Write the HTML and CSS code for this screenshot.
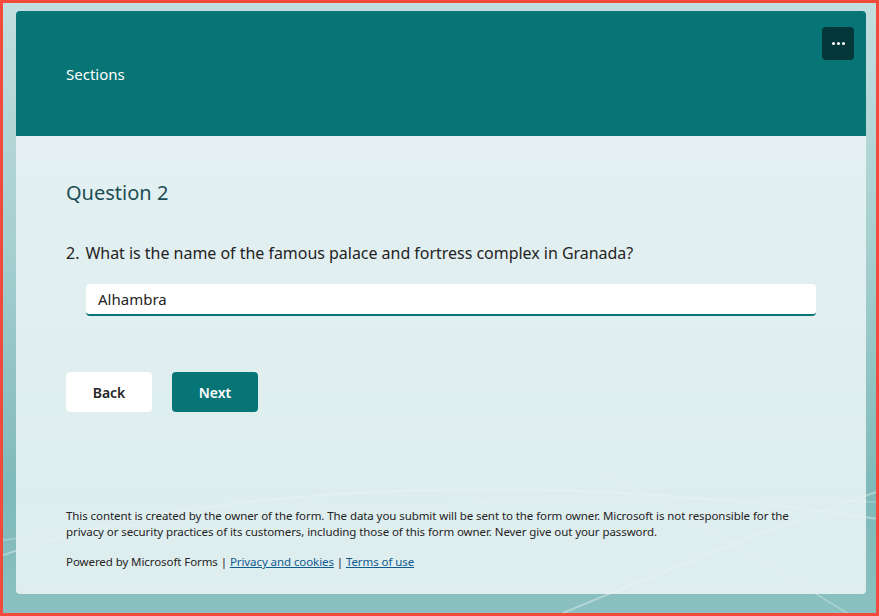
FILE: index.html
```html
<!DOCTYPE html>
<html lang="en">
<head>
<meta charset="utf-8">
<title>Sections</title>
<link rel="stylesheet" href="styles.css">
</head>
<body>
<div class="frame">
  <svg class="swoosh" width="873" height="610" viewBox="0 0 873 610" aria-hidden="true">
    <path d="M-20 560 C 200 470, 600 470, 900 520" fill="none" stroke="#ffffff" stroke-opacity="0.35" stroke-width="2"/>
    <path d="M-20 540 C 250 500, 650 490, 900 500" fill="none" stroke="#ffffff" stroke-opacity="0.25" stroke-width="1.5"/>
    <path d="M560 610 C 680 560, 780 520, 900 480" fill="none" stroke="#ffffff" stroke-opacity="0.35" stroke-width="2"/>
    <path d="M600 470 C 700 520, 780 570, 860 620" fill="none" stroke="#ffffff" stroke-opacity="0.3" stroke-width="1.5"/>
  </svg>
  <main class="card">
    <header class="card-head">
      <h1 class="title">Sections</h1>
      <button class="more" aria-label="More options">
        <span class="dot"></span><span class="dot"></span><span class="dot"></span>
      </button>
    </header>
    <section class="card-body">
      <h2 class="section-title">Question 2</h2>
      <div class="question">
        <span class="qnum">2.</span>
        <span class="qtext">What is the name of the famous palace and fortress complex in Granada?</span>
      </div>
      <div class="answer">Alhambra</div>
      <div class="buttons">
        <button class="btn btn-back">Back</button>
        <button class="btn btn-next">Next</button>
      </div>
      <footer class="footer">
        <p class="disclaimer">This content is created by the owner of the form. The data you submit will be sent to the form owner. Microsoft is not responsible for the privacy or security practices of its customers, including those of this form owner. Never give out your password.</p>
        <p class="powered">Powered by Microsoft Forms | <a href="#">Privacy and cookies</a> | <a href="#">Terms of use</a></p>
      </footer>
    </section>
  </main>
</div>
</body>
</html>
```
FILE: styles.css
```css
* { box-sizing: border-box; }
html, body { margin: 0; padding: 0; }
body {
  font-family: "Noto Sans", "Open Sans", sans-serif;
  color: #242424;
}
.frame {
  position: relative;
  width: 879px;
  height: 616px;
  border: 3px solid #f44a3d;
  background: linear-gradient(180deg, #c3dedf 0%, #a6cfd0 40%, #7fb9b9 80%, #8ac0c0 100%);
  padding: 8px 10px 19px 13px;
  overflow: hidden;
}
.swoosh {
  position: absolute;
  left: 0;
  top: 0;
}
.card {
  position: relative;
  height: 100%;
  border-radius: 4px;
  display: flex;
  flex-direction: column;
  overflow: hidden;
}
.card-head {
  position: relative;
  height: 125px;
  background: #077576;
  display: flex;
  align-items: center;
  padding-left: 50px;
}
.title {
  margin: 0;
  font-size: 15px;
  font-weight: 400;
  color: #ffffff;
}
.more {
  position: absolute;
  top: 16px;
  right: 12px;
  width: 32px;
  height: 33px;
  border: none;
  border-radius: 4px;
  background: #03373a;
  display: flex;
  align-items: center;
  justify-content: center;
  gap: 2px;
  padding: 0;
}
.dot {
  width: 3px;
  height: 3px;
  border-radius: 50%;
  background: #ffffff;
}
.card-body {
  flex: 1;
  background: rgba(234, 244, 245, 0.88);
  padding: 43px 50px 0 50px;
  display: flex;
  flex-direction: column;
}
.section-title {
  margin: 0;
  font-size: 20px;
  line-height: 28px;
  font-weight: 400;
  color: #1b4d55;
}
.question {
  margin-top: 35px;
  font-size: 16px;
  line-height: 22px;
  display: flex;
  gap: 6px;
}
.qtext { letter-spacing: -0.03px; }
.answer {
  margin: 20px 0 0 20px;
  height: 32px;
  background: #ffffff;
  border-radius: 4px;
  border-bottom: 2px solid #077576;
  font-size: 15px;
  line-height: 30px;
  padding: 0 12px;
}
.buttons {
  margin-top: 56px;
  display: flex;
  gap: 20px;
}
.btn {
  width: 86px;
  height: 40px;
  border: none;
  border-radius: 4px;
  font-family: inherit;
  font-size: 14px;
  font-weight: 600;
}
.btn-back { background: #ffffff; color: #242424; }
.btn-next { background: #077576; color: #ffffff; }
.footer {
  margin-top: auto;
  padding-bottom: 24px;
  font-size: 11.5px;
  letter-spacing: -0.08px;
  line-height: 16px;
  color: #242424;
}
.footer p { margin: 0; }
.powered { margin-top: 14px !important; }
.powered a { color: #0f5b8f; }
```
